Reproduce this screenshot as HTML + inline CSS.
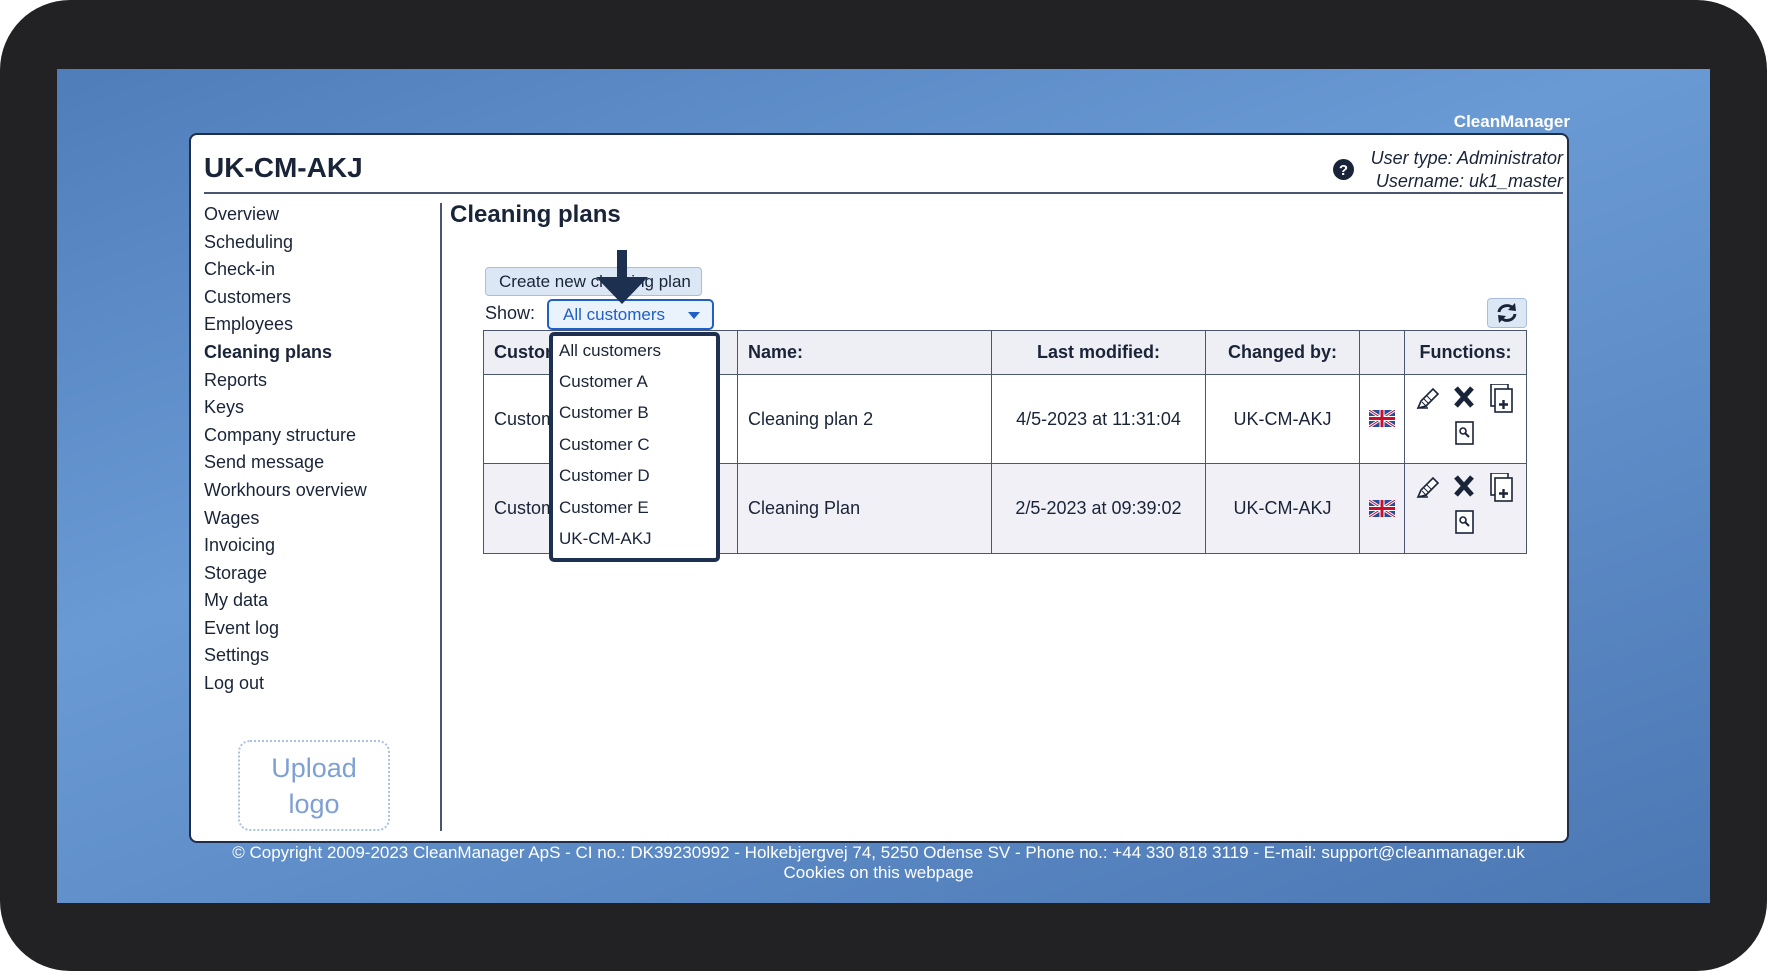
<!DOCTYPE html>
<html><head><meta charset="utf-8"><style>
*{margin:0;padding:0;box-sizing:border-box}
body{width:1767px;height:971px;background:#fff;font-family:"Liberation Sans",Arial,sans-serif;position:relative;overflow:hidden}
.frame{position:absolute;left:0;top:0;width:1767px;height:971px;background:#222224;border-radius:70px}
.blue{position:absolute;left:57px;top:69px;width:1653px;height:834px;background:linear-gradient(160deg,#4f7dba 0%,#6a9ad4 40%,#5b89c4 70%,#4b77b3 100%)}
.abs{position:absolute}
.panel{position:absolute;left:189px;top:133px;width:1380px;height:710px;background:#fff;border:2px solid #1e2d4a;border-radius:8px}
.t{position:absolute;color:#1a2438;white-space:nowrap}
.nav div{position:absolute;left:204px;font-size:18px;color:#1a2438;white-space:nowrap}
table{position:absolute;left:483px;top:330px;width:1044px;border-collapse:collapse;font-size:18px;color:#1a2438}
td,th{border:1px solid #4a5570;text-align:center}
th{height:44px;background:#eeeef5;font-weight:bold}
.r1 td{height:89px;background:#fff}
.r2 td{height:90px;background:#f0f0f6}
.dd{position:absolute;left:549px;top:332px;width:171px;height:230px;background:#fff;border:4px solid #1e3050;border-radius:5px}
.dd div{position:absolute;left:6px;font-size:17px;color:#1a2438;white-space:nowrap}
</style></head><body>
<div class="frame"></div>
<div class="blue"></div>
<div class="t" style="left:1435px;top:112px;width:135px;text-align:right;color:#fff;font-weight:bold;font-size:17px">CleanManager</div>
<div class="panel"></div>
<div class="t" style="left:204px;top:152px;font-size:28px;font-weight:bold">UK-CM-AKJ</div>
<div class="abs" style="left:204px;top:192px;width:1359px;height:2px;background:#4a5570"></div>
<svg class="abs" style="left:1333px;top:159px" width="21" height="21"><circle cx="10.5" cy="10.5" r="10.5" fill="#1a2438"/><text x="10.5" y="16" font-size="15" font-weight="bold" fill="#fff" text-anchor="middle" font-family="Liberation Sans">?</text></svg>
<div class="t" style="left:1300px;top:148px;width:263px;text-align:right;font-size:18px;font-style:italic">User type: Administrator</div>
<div class="t" style="left:1300px;top:171px;width:263px;text-align:right;font-size:18px;font-style:italic">Username: uk1_master</div>
<div class="nav">
<div style="top:204px">Overview</div><div style="top:232px">Scheduling</div><div style="top:259px">Check-in</div><div style="top:287px">Customers</div><div style="top:314px">Employees</div><div style="top:342px;font-weight:bold">Cleaning plans</div><div style="top:370px">Reports</div><div style="top:397px">Keys</div><div style="top:425px">Company structure</div><div style="top:452px">Send message</div><div style="top:480px">Workhours overview</div><div style="top:508px">Wages</div><div style="top:535px">Invoicing</div><div style="top:563px">Storage</div><div style="top:590px">My data</div><div style="top:618px">Event log</div><div style="top:645px">Settings</div><div style="top:673px">Log out</div>
</div>
<div class="abs" style="left:238px;top:740px;width:152px;height:91px;border:2px dotted #a8c0e4;border-radius:12px;color:#7ea0d4;font-size:27px;text-align:center;line-height:36px;padding-top:8px">Upload<br>logo</div>
<div class="abs" style="left:440px;top:203px;width:2px;height:628px;background:#4a5570"></div>
<div class="t" style="left:450px;top:201px;font-size:24px;font-weight:bold">Cleaning plans</div>
<div class="abs" style="left:485px;top:267px;width:217px;height:29px;background:#dce7f5;border:1px solid #a8bedc;border-radius:4px;font-size:17px;color:#1a2438;line-height:27px;padding-left:13px">Create new cleaning plan</div>
<div class="t" style="left:485px;top:303px;font-size:18px">Show:</div>
<div class="abs" style="left:547px;top:299px;width:167px;height:31px;background:#eaf2fc;border:2px solid #1f5fc8;border-radius:5px;font-size:17px;color:#1f5fc8;line-height:27px;padding-left:14px">All customers<span style="position:absolute;right:12px;top:11px;border-left:6px solid transparent;border-right:6px solid transparent;border-top:7px solid #1f5fc8"></span></div>
<svg class="abs" style="left:594px;top:250px" width="56" height="56"><rect x="23" y="0" width="10" height="30" fill="#1e3050"/><polygon points="2,27 54,27 28,54" fill="#1e3050"/></svg>
<div class="abs" style="left:1487px;top:298px;width:40px;height:30px;background:#dce7f5;border:1px solid #a8bedc;border-radius:4px"><svg width="38" height="28"><path d="M11 13a8 7 0 0 1 14-4" stroke="#1a2438" stroke-width="3" fill="none"/><polygon points="27,4 28,12 20,11" fill="#1a2438"/><path d="M27 15a8 7 0 0 1-14 4" stroke="#1a2438" stroke-width="3" fill="none"/><polygon points="11,24 10,16 18,17" fill="#1a2438"/></svg></div>
<table>
<tr><th style="width:254px;text-align:left;padding-left:10px">Customer:</th><th style="width:254px;text-align:left;padding-left:10px">Name:</th><th style="width:214px">Last modified:</th><th style="width:154px">Changed by:</th><th style="width:45px"></th><th>Functions:</th></tr>
<tr class="r1"><td style="text-align:left;padding-left:10px">Customer A</td><td style="text-align:left;padding-left:10px">Cleaning plan 2</td><td>4/5-2023 at 11:31:04</td><td>UK-CM-AKJ</td><td></td><td></td></tr>
<tr class="r2"><td style="text-align:left;padding-left:10px">Customer A</td><td style="text-align:left;padding-left:10px">Cleaning Plan</td><td>2/5-2023 at 09:39:02</td><td>UK-CM-AKJ</td><td></td><td></td></tr>
</table>
<svg width="0" height="0" style="position:absolute"><defs>
<g id="flag"><rect width="26" height="17" fill="#2a4a9a"/><path d="M0 0L26 17M26 0L0 17" stroke="#fff" stroke-width="3"/><path d="M0 0L26 17M26 0L0 17" stroke="#c8102e" stroke-width="1"/><path d="M13 0V17M0 8.5H26" stroke="#fff" stroke-width="5"/><path d="M13 0V17M0 8.5H26" stroke="#c8102e" stroke-width="3"/></g>
<g id="fn"><path d="M4 24h10M4 24l3-7 12-12 5 5-12 12z" stroke="#1a2438" stroke-width="1.6" fill="#fff"/><path d="M8 18l5 5M10 15l5 5M13 12l5 5" stroke="#1a2438" stroke-width="1"/><path d="M42 4l16 18M58 4l-16 18" stroke="#1a2438" stroke-width="5"/><rect x="77" y="0" width="17" height="22" fill="#fff" stroke="#1a2438" stroke-width="1.6"/><rect x="81" y="5" width="17" height="23" fill="#fff" stroke="#1a2438" stroke-width="1.6"/><path d="M89.5 16v9M85 20.5h9" stroke="#1a2438" stroke-width="2.4"/><rect x="42" y="38" width="17" height="22" fill="#fff" stroke="#1a2438" stroke-width="1.6"/><circle cx="49" cy="47" r="3" fill="none" stroke="#1a2438" stroke-width="1.6"/><path d="M51 49l4 4" stroke="#1a2438" stroke-width="2"/></g>
</defs></svg>
<svg class="abs" style="left:1369px;top:410px" width="26" height="17"><use href="#flag"/></svg>
<svg class="abs" style="left:1369px;top:500px" width="26" height="17"><use href="#flag"/></svg>
<svg class="abs" style="left:1414px;top:384px" width="104" height="62"><use href="#fn"/></svg>
<svg class="abs" style="left:1414px;top:473px" width="104" height="62"><use href="#fn"/></svg>
<div class="dd">
<div style="top:5px">All customers</div><div style="top:36px">Customer A</div><div style="top:67px">Customer B</div><div style="top:99px">Customer C</div><div style="top:130px">Customer D</div><div style="top:162px">Customer E</div><div style="top:193px">UK-CM-AKJ</div>
</div>
<div class="t" style="left:0;width:1757px;top:843px;text-align:center;color:#fff;font-size:17px;line-height:20px">© Copyright 2009-2023 CleanManager ApS - CI no.: DK39230992 - Holkebjergvej 74, 5250 Odense SV - Phone no.: +44 330 818 3119 - E-mail: support@cleanmanager.uk<br>Cookies on this webpage</div>
</body></html>
